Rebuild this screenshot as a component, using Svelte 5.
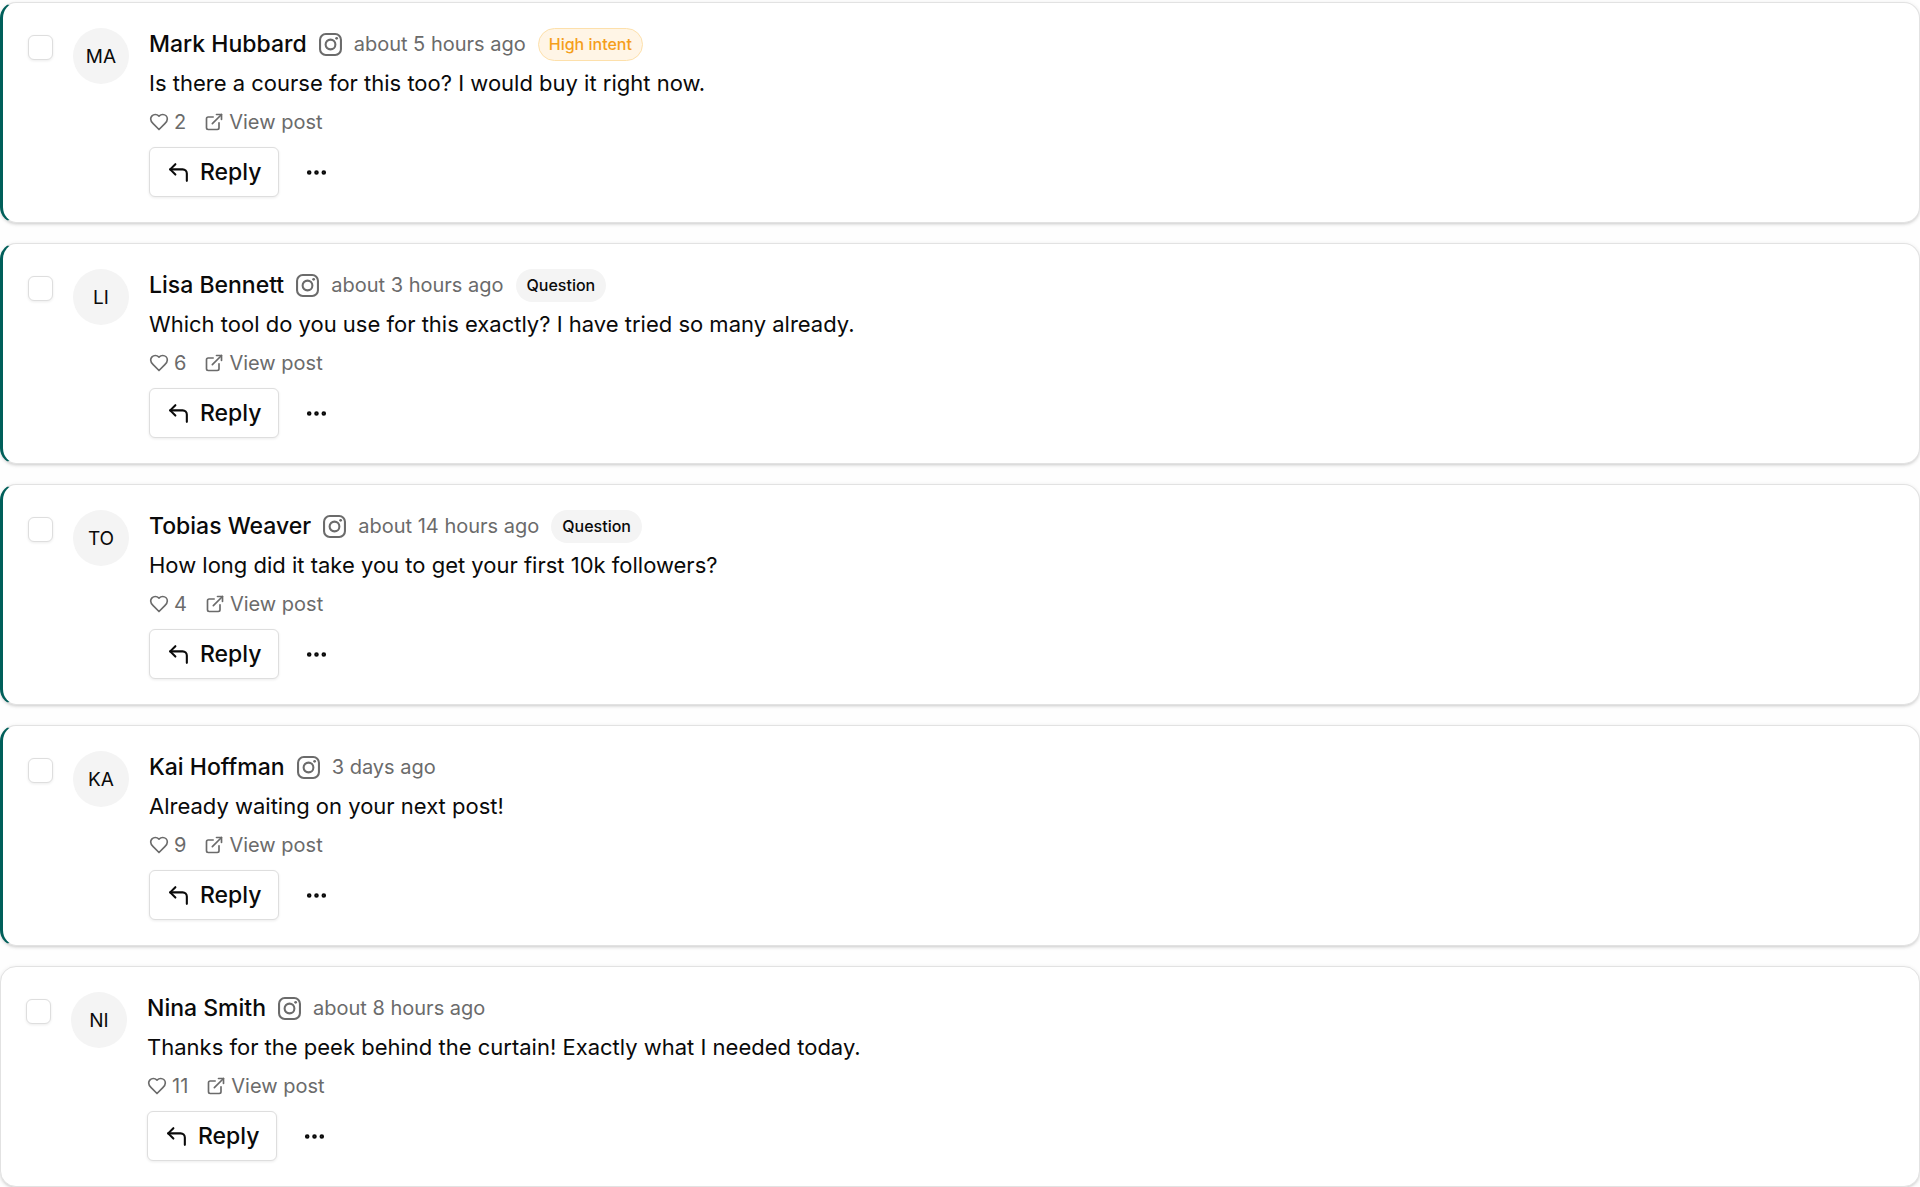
<script lang="ts">
  type Comment = {
    id: number;
    author: string;
    time: string;
    text: string;
    likes: number;
    unread: boolean;
    tag?: { label: string; tone: 'warning' | 'neutral' };
  };

  const comments: Comment[] = [
    {
      id: 1,
      author: 'Mark Hubbard',
      time: 'about 5 hours ago',
      text: 'Is there a course for this too? I would buy it right now.',
      likes: 2,
      unread: true,
      tag: { label: 'High intent', tone: 'warning' }
    },
    {
      id: 2,
      author: 'Lisa Bennett',
      time: 'about 3 hours ago',
      text: 'Which tool do you use for this exactly? I have tried so many already.',
      likes: 6,
      unread: true,
      tag: { label: 'Question', tone: 'neutral' }
    },
    {
      id: 3,
      author: 'Tobias Weaver',
      time: 'about 14 hours ago',
      text: 'How long did it take you to get your first 10k followers?',
      likes: 4,
      unread: true,
      tag: { label: 'Question', tone: 'neutral' }
    },
    {
      id: 4,
      author: 'Kai Hoffman',
      time: '3 days ago',
      text: 'Already waiting on your next post!',
      likes: 9,
      unread: true
    },
    {
      id: 5,
      author: 'Nina Smith',
      time: 'about 8 hours ago',
      text: 'Thanks for the peek behind the curtain! Exactly what I needed today.',
      likes: 11,
      unread: false
    }
  ];

  let selected = $state<number[]>([]);

  const initials = (name: string) => name.slice(0, 2).toUpperCase();
</script>

<main class="inbox">
  {#each comments as comment (comment.id)}
    <article class="card" class:unread={comment.unread}>
      <input
        class="check"
        type="checkbox"
        value={comment.id}
        bind:group={selected}
        aria-label={`Select comment from ${comment.author}`}
      />
      <div class="avatar">{initials(comment.author)}</div>

      <div class="content">
        <header class="header">
          <span class="author">{comment.author}</span>
          <svg class="network" viewBox="0 0 24 24" aria-hidden="true">
            <rect x="1.1" y="1.1" width="21.8" height="21.8" rx="6" />
            <circle cx="12" cy="12" r="5.1" />
            <circle class="dot" cx="18.4" cy="5.6" r="1.44" />
          </svg>
          <span class="time">{comment.time}</span>
          {#if comment.tag}
            <span class="tag {comment.tag.tone}">{comment.tag.label}</span>
          {/if}
        </header>

        <p class="text">{comment.text}</p>

        <div class="meta">
          <span class="meta-item">
            <svg class="icon" viewBox="0 0 24 24" aria-hidden="true">
              <path d="M19 14c1.49-1.46 3-3.21 3-5.5A5.5 5.5 0 0 0 16.5 3c-1.76 0-3 .5-4.5 2-1.5-1.5-2.74-2-4.5-2A5.5 5.5 0 0 0 2 8.5c0 2.3 1.5 4.05 3 5.5l7 7Z" />
            </svg>
            {comment.likes}
          </span>
          <a class="meta-item" href="#post-{comment.id}">
            <svg class="icon" viewBox="0 0 24 24" aria-hidden="true">
              <path d="M15 3h6v6" />
              <path d="M10 14 21 3" />
              <path d="M18 13v6a2 2 0 0 1-2 2H5a2 2 0 0 1-2-2V8a2 2 0 0 1 2-2h6" />
            </svg>
            View post
          </a>
        </div>

        <div class="actions">
          <button class="reply" type="button">
            <svg class="icon" viewBox="0 0 24 24" aria-hidden="true">
              <path d="M20 20v-7a4 4 0 0 0-4-4H4" />
              <path d="M9 14 4 9l5-5" />
            </svg>
            Reply
          </button>
          <button class="more" type="button" aria-label="More actions">
            <svg class="icon" viewBox="0 0 24 24" aria-hidden="true">
              <circle cx="12" cy="12" r="1.2" />
              <circle cx="19" cy="12" r="1.2" />
              <circle cx="5" cy="12" r="1.2" />
            </svg>
          </button>
        </div>
      </div>
    </article>
  {/each}
</main>

<style>
  :global(body) {
    background: #fefefe;
  }

  .inbox {
    display: flex;
    flex-direction: column;
    gap: 20px;
    padding-top: 2px;
    color: #0a0a0a;
    font-family: Inter, "Liberation Sans", sans-serif;
    font-size: 22px;
  }

  .card {
    display: flex;
    align-items: flex-start;
    gap: 20px;
    padding: 25px;
    border: 1px solid #e2e2e2;
    border-radius: 16px;
    background: #fff;
    box-shadow:
      0 1px 4px rgba(0, 0, 0, 0.1),
      0 2px 3px -1px rgba(0, 0, 0, 0.12);
  }

  .card.unread {
    border-left: 3px solid #005f5a;
  }

  .check {
    flex: none;
    width: 25px;
    height: 25px;
    margin: 7px 0 0;
    appearance: none;
    border: 1px solid #dedede;
    border-radius: 6px;
    background: #fff;
    box-shadow: 0 1px 3px rgba(0, 0, 0, 0.08);
  }

  .check:checked {
    border-color: #005f5a;
    background: #005f5a;
  }

  .avatar {
    display: grid;
    flex: none;
    place-items: center;
    width: 56px;
    height: 56px;
    border-radius: 50%;
    background: #f4f4f4;
    font-size: 19px;
  }

  .content {
    flex: 1;
    min-width: 0;
  }

  .header {
    display: flex;
    flex-wrap: wrap;
    align-items: center;
    gap: 12px;
    line-height: 33px;
  }

  .author {
    font-size: 23px;
    font-weight: 500;
  }

  .network {
    width: 23px;
    height: 23px;
    fill: none;
    stroke: #6b6b6b;
    stroke-width: 2.16;
  }

  .network .dot {
    fill: #6b6b6b;
    stroke: none;
  }

  .time,
  .meta {
    color: #6b6b6b;
    font-size: 20px;
  }

  .tag {
    padding: 0 10px;
    border: 1px solid transparent;
    border-radius: 999px;
    font-size: 16px;
    font-weight: 500;
    line-height: 31px;
  }

  .tag.neutral {
    background: #f4f4f4;
  }

  .tag.warning {
    border-color: #fde0ab;
    background: #fff5e6;
    color: #f59e1b;
  }

  .text {
    margin: 6px 0 0;
    line-height: 32px;
  }

  .meta {
    display: flex;
    gap: 18px;
    margin-top: 11px;
    line-height: 24px;
  }

  .meta-item {
    display: flex;
    align-items: center;
    gap: 5px;
    color: inherit;
    text-decoration: none;
  }

  .icon {
    width: 20px;
    height: 20px;
    fill: none;
    stroke: currentColor;
    stroke-width: 2;
    stroke-linecap: round;
    stroke-linejoin: round;
  }

  .actions {
    display: flex;
    gap: 12px;
    margin-top: 13px;
  }

  .reply,
  .more {
    display: flex;
    align-items: center;
    justify-content: center;
    height: 50px;
    border: 1px solid transparent;
    border-radius: 6px;
    background: transparent;
    color: inherit;
    font: inherit;
    font-size: 23px;
    font-weight: 500;
    cursor: pointer;
  }

  .reply {
    gap: 9px;
    padding: 0 16px;
    border-color: #dedede;
    background: #fff;
    box-shadow: 0 1px 3px rgba(0, 0, 0, 0.08);
  }

  .more {
    width: 52px;
    padding: 0;
  }

  .reply .icon,
  .more .icon {
    width: 25px;
    height: 25px;
  }

  .reply:hover,
  .more:hover {
    background: #f4f4f4;
  }
</style>
